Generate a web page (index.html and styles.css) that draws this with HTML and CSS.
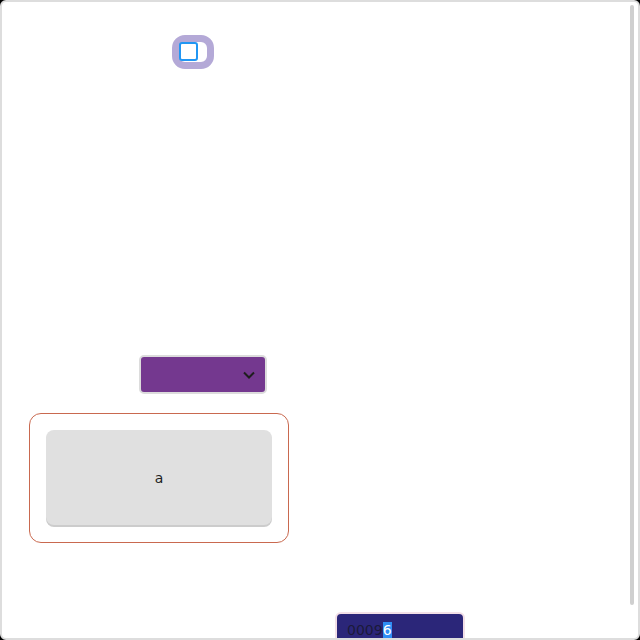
FILE: index.html
```html
<!DOCTYPE html>
<html>
<head>
<meta charset="utf-8">
<link rel="stylesheet" href="styles.css">
</head>
<body>
<div class="frame">
  <label class="toggle"><span class="check"></span></label>
  <div class="select">
    <svg class="chevron" width="12" height="8" viewBox="0 0 12 8"><path d="M1 1.5 L6 6.5 L11 1.5" fill="none" stroke="#1e1e1e" stroke-width="2"/></svg>
  </div>
  <div class="card">
    <div class="button">a</div>
  </div>
  <div class="input"><span class="digits">0009</span><span class="sel">6</span></div>
  <div class="thumb"></div>
</div>
</body>
</html>
```
FILE: styles.css
```css
html { background: #000; }
body { margin: 0; font-family: "DejaVu Sans", sans-serif; }
.frame {
  position: relative;
  width: 640px;
  height: 640px;
  box-sizing: border-box;
  border: 2px solid #dddddd;
  border-radius: 6px;
  background: #fff;
  overflow: hidden;
  display: flex;
  flex-direction: column;
  align-items: flex-start;
}
.frame > * { flex-shrink: 0; }
.toggle {
  margin-top: 33px;
  margin-left: 170px;
  display: flex;
  width: 28px;
  height: 20px;
  background: #fff;
  border: 7px solid #b4a9d7;
  border-radius: 13px;
}
.check {
  width: 19px;
  height: 19px;
  box-sizing: border-box;
  border: 2px solid #2196f3;
  border-radius: 3px;
  background: #fff;
}
.select {
  margin-top: 286px;
  margin-left: 137px;
  width: 128px;
  height: 39px;
  box-sizing: border-box;
  border: 2px solid #dcdcdc;
  border-radius: 5px;
  background: #74388f;
  display: flex;
  align-items: center;
  justify-content: flex-end;
  padding-right: 10px;
}
.chevron { display: block; }
.card {
  margin-top: 19px;
  margin-left: 27px;
  width: 260px;
  height: 130px;
  box-sizing: border-box;
  border: 1px solid #c9694f;
  border-radius: 12px;
  padding: 16px;
}
.button {
  height: 95px;
  background: #e0e0e0;
  border-radius: 8px;
  box-shadow: 0 2px 0 #cccccc;
  display: flex;
  align-items: center;
  justify-content: center;
  font-size: 14px;
  color: #222;
}
.input {
  margin-top: 69px;
  margin-left: 333px;
  width: 130px;
  height: 40px;
  box-sizing: border-box;
  border: 2px solid #f2dfe7;
  border-radius: 6px;
  background: #2b2679;
  padding: 8px 10px;
  font-size: 14px;
  line-height: 17px;
  display: flex;
  align-items: flex-start;
}
.digits { color: #1b1a3a; }
.sel { background: #2f8ef5; color: #fff; }
.thumb {
  position: absolute;
  top: 3px;
  right: 4px;
  width: 4px;
  height: 600px;
  background: #cfcfcf;
  border-radius: 2px;
}
```
